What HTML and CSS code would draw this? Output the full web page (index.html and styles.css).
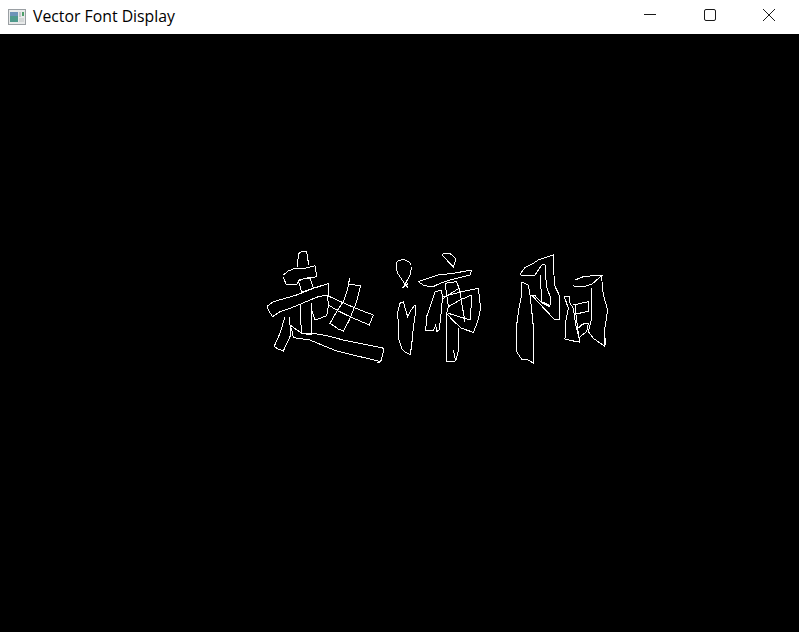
FILE: index.html
```html
<!DOCTYPE html>
<html lang="en">
<head>
    <meta charset="UTF-8">
    <meta name="viewport" content="width=device-width, initial-scale=1.0">
    <title>Vector Font Display</title>
    <link rel="stylesheet" href="styles.css">
</head>
<body>
    <div class="window">
        <!-- Title bar -->
        <div class="titlebar">
            <svg class="app-icon" viewBox="0 0 18 16">
                <rect x="0.5" y="0.5" width="17" height="15" fill="#e8eaea" stroke="#9a9fa3"/>
                <rect x="2" y="3" width="8" height="10" fill="#4f9a8c"/>
                <rect x="2" y="3" width="8" height="4" fill="#6d93b8"/>
                <rect x="11" y="3" width="2" height="5" fill="#c4c8c8"/>
                <rect x="14" y="3" width="2" height="4" fill="#4fa06a"/>
                <rect x="11" y="9" width="5" height="4" fill="#d3d6d6"/>
            </svg>
            <span class="title">Vector Font Display</span>
            <div class="controls">
                <svg class="control" viewBox="0 0 46 34">
                    <path d="M16 14.5H28" stroke="#1a1a1a" fill="none"/>
                </svg>
                <svg class="control" viewBox="0 0 46 34">
                    <rect x="17.5" y="9.5" width="11" height="11" rx="1.5" stroke="#1a1a1a" fill="none"/>
                </svg>
                <svg class="control" viewBox="0 0 46 34">
                    <path d="M17 9L29 21M29 9L17 21" stroke="#1a1a1a" fill="none"/>
                </svg>
            </div>
        </div>

        <!-- Drawing area, each glyph is traced at 3x and scaled back down -->
        <svg class="canvas" viewBox="0 34 799 598">
            <g class="strokes" transform="translate(260 245) scale(0.3333)">
                <path d="M112 65L115 30Q116 22 125 20L138 18Q144 30 145 60"/>
                <path d="M70 90L85 78L100 72L135 70L165 62L170 95L150 100L120 103L110 118L85 120L78 118L70 95"/>
                <path d="M115 108L128 102L150 97L160 130L140 137L125 140L115 108"/>
                <path d="M20 185L40 170L75 160L110 150L160 130L185 122L207 115L205 150L175 155L150 165L120 178L90 190L60 200L38 215L28 200L20 185"/>
                <path d="M120 178L122 225L125 265L155 270L155 225L155 175"/>
                <path d="M155 195L165 225L185 218L200 212L205 185L203 150"/>
                <path d="M203 152L260 178L300 195L340 210L328 240L300 228L270 215L235 198L205 180"/>
                <path d="M268 100L266 118L302 122L290 170L268 225L250 258L235 252L210 235L230 200L250 170L262 135L268 105"/>
                <path d="M75 215L60 265L42 305L55 312L70 318L82 292L92 270L90 240L88 215"/>
                <path d="M90 240L125 265L165 266L200 272L250 285L300 295L372 310L368 330L362 350L330 342L300 335L230 318L190 302L150 285L100 278L96 258L90 240"/>
                <path d="M366 340L362 350L352 353"/>
            </g>
            <g class="strokes" transform="translate(385 245) scale(0.3333)">
                <path d="M172 28Q185 22 195 25L213 42L205 65L190 50L172 30"/>
                <path d="M35 50Q45 42 60 45Q75 50 78 60Q80 75 75 90L60 118L48 100L38 85Q32 65 35 50"/>
                <path d="M55 128L60 118L70 128M52 128L70 115"/>
                <path d="M37 205L45 175L55 170L62 195L68 215L78 195L90 180L92 200L85 250L80 300L76 328Q60 325 50 310L42 285L40 240L38 205"/>
                <path d="M100 110L130 100L160 90L210 84L260 75L255 90L195 105L165 115L145 125L135 125L115 120L100 110"/>
                <path d="M150 140L170 135L172 160L170 190L165 235L162 255L155 260L152 240L145 258L122 258L125 215L140 170L150 140"/>
                <path d="M180 115L215 110L222 130L190 150L175 160"/>
                <path d="M175 155L230 140L280 130L287 190L278 230L265 262L230 250L205 228L185 205L190 185L225 165L260 150L258 190L255 225L222 215L190 205"/>
                <path d="M180 115L185 150L190 185M215 110L225 140L232 185L240 230"/>
                <path d="M185 205L185 350L212 348L222 310L222 250M205 315L210 340L212 348"/>
            </g>
            <g class="strokes" transform="translate(505 245) scale(0.3333)">
                <path d="M45 88L60 68L80 58L100 45L145 30L148 120L165 155L165 205L165 225L150 225L115 188L80 150"/>
                <path d="M82 150L90 152L112 175L135 185"/>
                <path d="M45 88L50 92L75 92L90 90L100 75L110 60"/>
                <path d="M110 60L120 60L122 95L125 125L137 160L135 182L110 170L108 130L108 90"/>
                <path d="M50 110L70 120L75 150L80 195L85 245L87 300L86 355L70 345L50 343L35 320L35 240L42 190L50 150L50 110"/>
                <path d="M85 280L85 345"/>
                <path d="M205 123L240 124L260 118L275 105L290 92L265 92L235 95L210 105"/>
                <path d="M290 92L292 125L295 150L308 195L303 230L298 258L298 303L265 280L250 260L258 230L260 180L260 130"/>
                <path d="M298 255L302 300"/>
                <path d="M178 155L195 153L195 175L205 190L212 240L225 290L205 288L180 282L182 230L190 190L178 155"/>
                <path d="M205 180L250 170L252 198L210 208"/>
                <path d="M210 180L214 220L218 250L225 295"/>
                <path d="M220 250Q228 238 240 235L250 235L245 260L225 275"/>
            </g>
        </svg>
    </div>
</body>
</html>
```

FILE: styles.css
```css
* {
    box-sizing: border-box;
    margin: 0;
    padding: 0;
}

body {
    width: 799px;
    height: 632px;
    overflow: hidden;
    background-color: #000;
}

.window {
    display: flex;
    flex-direction: column;
    height: 100%;
}

.titlebar {
    display: flex;
    align-items: center;
    height: 34px;
    padding-left: 8px;
    background-color: #fff;
    font-family: "Open Sans", "Noto Sans", sans-serif;
    font-size: 15.8px;
    color: #000;
}

.title {
    padding-bottom: 3px;
}

.app-icon {
    width: 18px;
    height: 16px;
    margin-right: 7px;
}

.controls {
    display: flex;
    margin-left: auto;
    margin-right: 7px;
}

.control {
    display: block;
    width: 46px;
    height: 34px;
    margin-left: 13px;
}

.canvas {
    display: block;
    width: 799px;
    height: 598px;
    background-color: #000;
}

.strokes path {
    fill: none;
    stroke: #fff;
    stroke-width: 1px;
    vector-effect: non-scaling-stroke;
    shape-rendering: crispEdges;
}
```
